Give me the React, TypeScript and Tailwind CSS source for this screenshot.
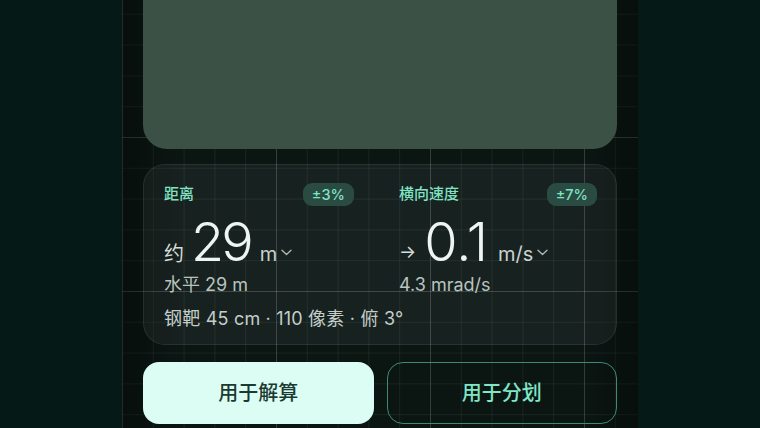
const font = { fontFamily: 'Inter, "Noto Sans CJK SC", sans-serif' };

function Chevron() {
  return (
    <svg width="11" height="7" viewBox="0 0 11 7" className="relative -top-[5px] ml-[4px]">
      <path d="M1 1.2 L5.5 5.5 L10 1.2" fill="none" stroke="#a9b6b1" strokeWidth="1.4" strokeLinecap="round" strokeLinejoin="round" />
    </svg>
  );
}

function Badge({ children }: { children: string }) {
  return (
    <span className="flex h-[23px] items-center rounded-[9px] bg-[#2a4b42] px-[9px] text-[14.5px] font-medium text-[#7fe3c4]">
      {children}
    </span>
  );
}

export default function App() {
  return (
    <div className="flex h-[428px] w-[760px] justify-center overflow-hidden bg-[#051a16]" style={font}>
      <div className="relative flex h-full w-[516px] flex-col bg-[#0b1613] bg-[linear-gradient(to_right,rgba(255,255,255,0.13)_1px,transparent_1px),linear-gradient(to_bottom,rgba(255,255,255,0.13)_1px,transparent_1px),linear-gradient(to_right,rgba(255,255,255,0.06)_1px,transparent_1px),linear-gradient(to_bottom,rgba(255,255,255,0.06)_1px,transparent_1px)] [background-size:154px_154px,154px_154px,30.8px_30.8px,30.8px_30.8px] [background-position:0_137px,0_137px,0_13.8px,0_13.8px] px-[21px]">
        <div className="pointer-events-none absolute inset-0 bg-[linear-gradient(to_right,rgba(0,0,0,0.35)_0%,transparent_12%,transparent_88%,rgba(0,0,0,0.35)_100%)]" />
        <div className="relative h-[149px] w-full shrink-0 rounded-b-[24px] bg-[#3c5146]" />
        <div className="relative mt-[15px] h-[181px] w-full shrink-0 rounded-[22px] border border-white/[0.08] bg-white/[0.05] px-[20px] pt-[18px]">
          <div className="grid grid-cols-[190px_198px] gap-x-[45px]">
            <div className="flex flex-col">
              <div className="flex h-[23px] items-center justify-between">
                <span className="text-[15px] font-medium text-[#7fe3c4]">距离</span>
                <Badge>±3%</Badge>
              </div>
              <div className="mt-[9px] flex items-baseline leading-none text-[#eef4f1]">
                <span className="text-[20px] text-[#d5ddd9]">约</span>
                <span className="ml-[7px] text-[54px] font-light tracking-[-3px]">29</span>
                <span className="ml-[9px] text-[20px] text-[#c9d3cf]">m</span>
                <Chevron />
              </div>
              <div className="mt-[4px] text-[18px] leading-[24px] text-[#b8c4bf]">水平 29 m</div>
            </div>
            <div className="flex flex-col">
              <div className="flex h-[23px] items-center justify-between">
                <span className="text-[15px] font-medium text-[#7fe3c4]">横向速度</span>
                <Badge>±7%</Badge>
              </div>
              <div className="mt-[9px] flex items-baseline leading-none text-[#eef4f1]">
                <span className="relative -top-[3px] text-[18px] text-[#d5ddd9]">→</span>
                <span className="ml-[8px] text-[54px] font-light">0.1</span>
                <span className="ml-[10px] text-[20px] text-[#c9d3cf]">m/s</span>
                <Chevron />
              </div>
              <div className="mt-[4px] text-[18px] leading-[24px] text-[#b8c4bf]">4.3 mrad/s</div>
            </div>
          </div>
          <div className="mt-[10px] text-[18px] leading-[24px] tracking-[0.2px] text-[#c3ceca]">钢靶 45 cm · 110 像素 · 俯 3°</div>
        </div>
        <div className="relative mt-[17px] grid grid-cols-2 gap-[13px]">
          <button className="flex h-[62px] items-center justify-center rounded-[16px] bg-[#dcfdf4] text-[20px] font-medium text-[#1b3b32]">
            用于解算
          </button>
          <button className="flex h-[62px] items-center justify-center rounded-[16px] border-[1.5px] border-[#3f8a74] text-[20px] font-medium text-[#80e6c6]">
            用于分划
          </button>
        </div>
      </div>
    </div>
  );
}
